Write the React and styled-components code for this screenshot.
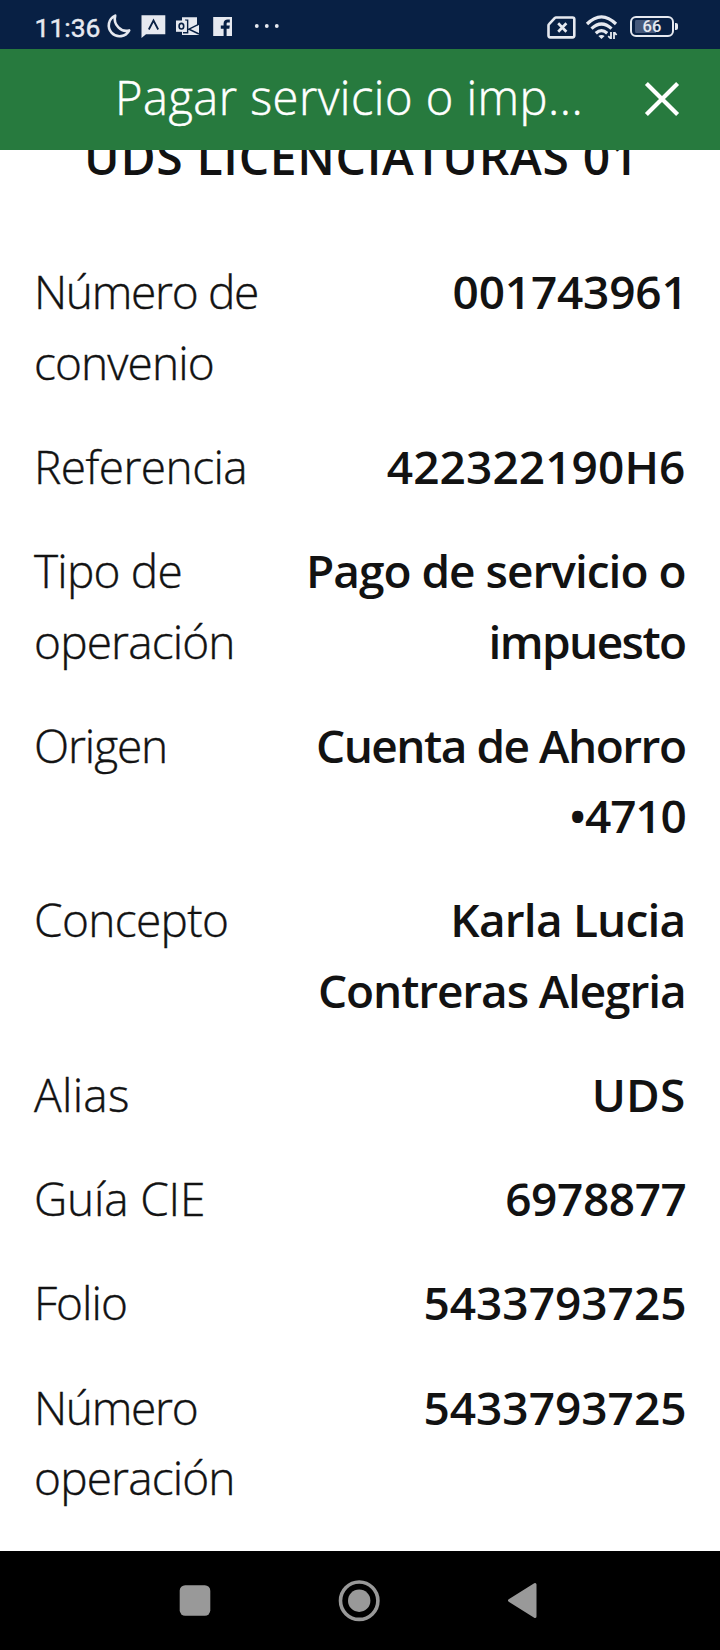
import React from "react";
import styled, { createGlobalStyle } from "styled-components";

const HEADING = "UDS LICENCIATURAS 01";

// track: letter spacing of the line, shift: optical right offset
const DETAILS = [
    {
        label: [{ text: "Número de", track: -1.3 }, { text: "convenio", track: -0.9 }],
        value: [{ text: "001743961", track: -0.2, shift: 2 }],
    },
    {
        label: [{ text: "Referencia", track: -0.55 }],
        value: [{ text: "422322190H6", track: 0.1 }],
    },
    {
        label: [{ text: "Tipo de", track: -0.8 }, { text: "operación", track: -0.85 }],
        value: [{ text: "Pago de servicio o", track: -1 }, { text: "impuesto", track: -1.6 }],
    },
    {
        label: [{ text: "Origen", track: -1.1 }],
        value: [{ text: "Cuenta de Ahorro", track: -1.5 }, { text: "•4710", track: -1.2 }],
    },
    {
        label: [{ text: "Concepto", track: -0.65 }],
        value: [{ text: "Karla Lucia", track: -0.8 }, { text: "Contreras Alegria", track: -1.12 }],
    },
    {
        label: [{ text: "Alias", track: 0.3 }],
        value: [{ text: "UDS", track: 0.2 }],
    },
    {
        label: [{ text: "Guía CIE", track: -0.2 }],
        value: [{ text: "6978877", track: -0.4, shift: 1 }],
    },
    {
        label: [{ text: "Folio", track: -1 }],
        value: [{ text: "5433793725", track: 0, shift: 1 }],
    },
    {
        label: [{ text: "Número", track: -1.3 }, { text: "operación", track: -0.85 }],
        value: [{ text: "5433793725", track: 0, shift: 1 }],
    },
];

function StatusBar () {
    return (
        <StatusTag>
            <Clock>11:36</Clock>
            <StatusIcon width="36" height="49" viewBox="0 0 36 49">
                <path
                    d="M15.2 15.6A10.8 10.8 0 1 0 29.2 30.4C21.5 32.8 12.8 25 15.2 15.6Z"
                    fill="none" stroke="#e6e9f0" strokeWidth="2.6" strokeLinejoin="round"
                />
            </StatusIcon>
            <StatusIcon width="35" height="49" viewBox="0 0 35 49">
                <path d="M5.5 15.3H29.3V34.3H10L5.5 38Z" fill="#e6e9f0" />
                <path d="M12.8 29.5L17.5 20.5L22.2 29.5" fill="none" stroke="#082044" strokeWidth="1.8" />
            </StatusIcon>
            <StatusIcon width="41" height="49" viewBox="0 0 41 49">
                <path d="M11 17.2H26V25.5L28 24.5V35H11Z" fill="#e6e9f0" />
                <path d="M28 24.2L18 29.2L28 34M14 20.2H16.6V32.8H12" fill="none" stroke="#082044" strokeWidth="1.5" />
                <rect x="5" y="20.5" width="10.6" height="11.3" fill="#e6e9f0" />
                <ellipse cx="10.4" cy="26.2" rx="2.3" ry="2.8" fill="none" stroke="#082044" strokeWidth="1.6" />
            </StatusIcon>
            <StatusIcon width="38" height="49" viewBox="0 0 38 49">
                <rect x="1.2" y="17" width="18.8" height="19" fill="#e6e9f0" />
                <path
                    d="M11.6 36V28.8H8.8V25.6H11.6V23.6C11.6 20.8 13.2 19.6 15.8 19.6H17.8V22.6H16.2C15 22.6 14.6 23.1 14.6 24V25.6H17.8L17.3 28.8H14.6V36Z"
                    fill="#082044"
                />
            </StatusIcon>
            <StatusIcon width="34" height="49" viewBox="0 0 34 49">
                <circle cx="6.8" cy="26" r="1.9" fill="#e6e9f0" />
                <circle cx="16.8" cy="26" r="1.9" fill="#e6e9f0" />
                <circle cx="26.8" cy="26" r="1.9" fill="#e6e9f0" />
            </StatusIcon>
            <Spacer />
            <StatusIcon width="40" height="49" viewBox="0 0 40 49">
                <path
                    d="M16 17.5H32.5Q34.3 17.5 34.3 19.3V35.6Q34.3 37.4 32.5 37.4H10.3Q8.5 37.4 8.5 35.6V25.6Q8.5 24.8 9.1 24.2L14.9 18Q15.3 17.5 16 17.5Z"
                    fill="none" stroke="#e6e9f0" strokeWidth="2.6"
                />
                <path d="M18.2 23.3L26.4 31.7M26.4 23.3L18.2 31.7" stroke="#e6e9f0" strokeWidth="2.7" />
            </StatusIcon>
            <StatusIcon width="45" height="49" viewBox="0 0 45 49">
                <g fill="none" stroke="#e6e9f0" strokeWidth="3.2">
                    <path d="M7 24Q21.5 9.5 36 24" />
                    <path d="M11.5 28.7Q21.5 19.3 31.5 28.7" />
                    <path d="M15.8 33.2Q21.5 28 27.2 33.2" />
                </g>
                <path d="M18.4 36Q21.5 33.8 24.6 36L21.5 39Z" fill="#e6e9f0" />
                <path d="M28 39.5V31.5H37V39.5Z" fill="#082044" />
                <path d="M31 32V39M34 32V39M28.2 36.2L30.6 38.4M34.4 32.4L36.6 35" stroke="#e6e9f0" strokeWidth="1.8" />
            </StatusIcon>
            <Battery>
                <BatteryCase>66</BatteryCase>
                <BatteryTip />
            </Battery>
        </StatusTag>
    );
}

function Lines ({ items }) {
    return items.map((item) => (
        <Line key={item.text} track={item.track} shift={item.shift}>{item.text}</Line>
    ));
}

function App () {
    return (
        <Screen>
            <GlobalStyle />
            <StatusBar />
            <Header>
                <Title>Pagar servicio o imp...</Title>
                <CloseBtn aria-label="Cerrar">
                    <svg width="36" height="36" viewBox="0 0 36 36">
                        <path d="M2.4 2.4L33.6 33.6M33.6 2.4L2.4 33.6" stroke="#fff" strokeWidth="4.2" />
                    </svg>
                </CloseBtn>
            </Header>
            <Content>
                <Heading>{HEADING}</Heading>
                <List>
                    {DETAILS.map((item, i) => (
                        <Row key={i}>
                            <Label><Lines items={item.label} /></Label>
                            <Value><Lines items={item.value} /></Value>
                        </Row>
                    ))}
                </List>
            </Content>
            <NavBar>
                <svg width="42" height="42" viewBox="0 0 42 42">
                    <rect x="5.7" y="5.2" width="30.6" height="30.6" rx="5.5" fill="#999" />
                </svg>
                <svg width="42" height="42" viewBox="0 0 42 42">
                    <circle cx="21.2" cy="20.7" r="18.7" fill="none" stroke="#999" strokeWidth="3.6" />
                    <circle cx="21.2" cy="20.7" r="11.2" fill="#999" />
                </svg>
                <svg width="42" height="42" viewBox="0 0 42 42">
                    <path d="M7.5 20.5L33 4.5V36.5Z" fill="#999" stroke="#999" strokeWidth="3" strokeLinejoin="round" />
                </svg>
            </NavBar>
        </Screen>
    );
}
export default App;

const GlobalStyle = createGlobalStyle`
    body {
        margin: 0;
        background-color: #fff;
    }
    * {
        box-sizing: border-box;
    }
`;

const Screen = styled.div`
    display: flex;
    flex-direction: column;
    width: 720px;
    height: 1650px;
    overflow: hidden;
    font-family: "Open Sans", "Noto Sans", sans-serif;
    color: #121212;
    background-color: #fff;
`;

const StatusTag = styled.div`
    display: flex;
    flex: none;
    height: 49px;
    padding: 0 42px 0 34.5px;
    background-color: #082044;
`;

const Clock = styled.span`
    width: 65.5px;
    font-family: Roboto, sans-serif;
    font-size: 26.5px;
    line-height: 56px;
    color: #e6e9f0;
    -webkit-text-stroke: 0.4px #e6e9f0;
`;

const StatusIcon = styled.svg`
    flex: none;
    display: block;
`;

const Spacer = styled.div`
    flex: 1;
`;

const Battery = styled.div`
    display: flex;
    align-items: center;
    gap: 1px;
    height: 21px;
    margin-top: 16px;
    margin-left: 5px;
`;

const BatteryCase = styled.div`
    width: 44px;
    height: 21px;
    padding: 2px 3px;
    border: 2px solid #e6e9f0;
    border-radius: 6px;
    font-family: Roboto, sans-serif;
    font-size: 16.5px;
    font-weight: 500;
    line-height: 14px;
    text-align: center;
    color: #e6e9f0;
    background: linear-gradient(to right, #46587a 62%, #082044 62%) content-box;
`;

const BatteryTip = styled.div`
    width: 3px;
    height: 7px;
    border-radius: 0 2px 2px 0;
    background-color: #e6e9f0;
`;

const Header = styled.header`
    display: flex;
    flex: none;
    justify-content: space-between;
    height: 101px;
    padding: 0 40px 0 115px;
    color: #fff;
    background-color: #277a3e;
`;

const Title = styled.div`
    font-size: 47px;
    font-weight: 300;
    line-height: 96px;
    letter-spacing: 0.5px;
    white-space: nowrap;
    -webkit-text-stroke: 0.5px #fff;
`;

const CloseBtn = styled.button`
    width: 36px;
    height: 36px;
    margin-top: 32px;
    padding: 0;
    border: none;
    background: none;
`;

// the heading is scrolled partly under the header
const Content = styled.main`
    flex: 1;
    overflow: hidden;
`;

const Heading = styled.h1`
    margin: -28px 0 64px;
    padding-left: 3px;
    font-size: 48px;
    font-weight: 600;
    line-height: 70.4px;
    letter-spacing: 0.7px;
    text-align: center;
    white-space: nowrap;
`;

const List = styled.dl`
    display: flex;
    flex-direction: column;
    gap: 33.8px;
    margin: 0;
    padding: 0 34.5px 0 34px;
    font-size: 46px;
    line-height: 70.4px;
`;

const Row = styled.div`
    display: flex;
    justify-content: space-between;
`;

const Label = styled.dt`
    font-weight: 300;
    -webkit-text-stroke: 0.4px #121212;
`;

const Value = styled.dd`
    margin: 0;
    font-weight: 600;
    text-align: right;
`;

const Line = styled.span.withConfig({
    shouldForwardProp: (prop) => prop !== "track" && prop !== "shift",
})`
    display: block;
    margin-right: ${props => props.shift ? -props.shift : 0}px;
    letter-spacing: ${props => props.track}px;
    white-space: nowrap;
`;

const NavBar = styled.nav`
    display: flex;
    flex: none;
    align-items: center;
    justify-content: space-between;
    height: 99px;
    padding: 0 176px 0 173.5px;
    background-color: #000;
`;
